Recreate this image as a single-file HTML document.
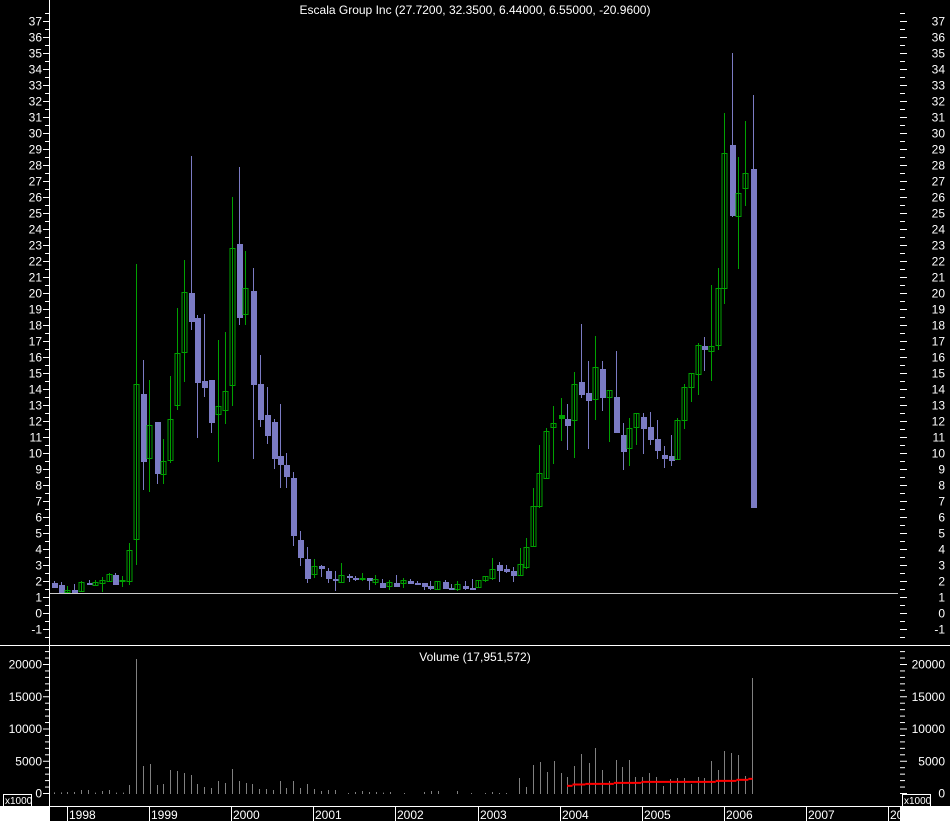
<!DOCTYPE html>
<html><head><meta charset="utf-8"><style>
html,body{margin:0;padding:0;background:#000;width:950px;height:821px;overflow:hidden}
svg{display:block}
text{font-family:"Liberation Sans",sans-serif;font-size:12px;fill:#fff}
</style></head><body>
<svg id="s" width="950" height="821" xmlns="http://www.w3.org/2000/svg"></svg>
<script>
var s=document.getElementById('s'),h='';
function L(x1,y1,x2,y2,c,w){h+='<line x1="'+x1+'" y1="'+y1+'" x2="'+x2+'" y2="'+y2+'" stroke="'+c+'" stroke-width="'+(w||1)+'"/>';}
function T(x,y,t,a){h+='<text x="'+x+'" y="'+y+'" text-anchor="'+(a||'start')+'">'+t+'</text>';}
h+='<rect width="950" height="821" fill="#000"/>';
for(var v=-2;v<=37.5;v+=0.5){var y=613-16*v+0.5;
 if(y<2||y>642)continue;
 var maj=(v%1===0);
 L(maj?43:45,y,50,y,'#fff');L(900,y,maj?907:905,y,'#fff');
 if(maj&&v>=-1){T(42,y+4,v,'end');T(945,y+4,v,'end');}}
L(49.5,0,49.5,806,'#fff');
L(50,593.5,898,593.5,'#ccc');
L(0,645.5,950,645.5,'#fff');
for(var k=0;k<=22;k++){var y=793.5-k*6.45;if(y<649)continue;var maj=(k%5===0);
 L(maj?43:45,y,50,y,'#fff');L(900,y,maj?907:905,y,'#fff');
 if(maj){T(42,y+4,k*1000,'end');T(945,y+4,k*1000,'end');}}
T(475,14,'Escala Group Inc (27.7200, 32.3500, 6.44000, 6.55000, -20.9600)','middle');
T(475,661,'Volume (17,951,572)','middle');
var C=[[54,581,588,583,587,'p'],[61,582,592,585,592,'p'],[67,586,592,590,592,'g'],[74,584,592,590,592,'p'],[81,581,592,582,591,'g'],[89,580,584,583,584,'p'],[95,580,586,582,585,'g'],[102,577,592,580,583,'g'],[109,573,582,574,581,'g'],[115,573,585,575,584,'p'],[122,576,587,580,581,'g'],[129,543,585,550,581,'g'],[136,264,565,384,539,'g'],[143,360,490,394,461,'p'],[149,380,492,425,458,'g'],[157,422,484,422,473,'p'],[163,439,484,461,474,'g'],[170,376,463,419,460,'g'],[177,308,410,353,405,'g'],[184,260,382,292,352,'g'],[191,156,330,293,321,'p'],[197,315,438,318,382,'p'],[204,314,397,381,387,'p'],[211,380,433,380,422,'p'],[218,340,462,406,414,'g'],[225,332,424,391,410,'g'],[232,197,406,248,385,'g'],[239,167,325,244,317,'p'],[245,251,325,288,314,'g'],[253,268,459,291,384,'p'],[260,355,427,384,419,'p'],[267,387,444,415,435,'p'],[274,419,469,422,458,'p'],[280,404,488,456,464,'p'],[286,453,488,465,476,'p'],[293,472,546,478,535,'p'],[300,531,566,540,557,'p'],[307,547,583,559,578,'p'],[314,559,578,566,574,'g'],
[321,565,577,566,568,'p'],[328,568,583,571,578,'p'],[335,571,591,579,580,'p'],[341,563,582,575,582,'g'],[349,574,582,576,577,'p'],[355,576,581,578,579,'p'],[362,573,581,578,579,'g'],[369,578,590,578,580,'p'],[375,575,585,579,582,'g'],[382,579,587,583,587,'p'],[389,580,590,582,586,'g'],[396,575,586,583,586,'p'],[403,578,588,580,583,'g'],[410,579,584,581,583,'p'],[417,581,585,583,584,'p'],[424,583,590,583,586,'p'],[430,581,590,586,588,'p'],[437,581,590,581,589,'g'],[445,580,588,582,588,'p'],[451,584,589,588,589,'p'],[457,581,591,584,589,'g'],[465,581,590,586,588,'p'],[472,579,589,588,589,'p'],[478,580,588,580,587,'g'],[485,576,582,576,580,'g'],[492,558,580,569,578,'g'],[499,562,582,565,570,'p'],[506,565,573,569,571,'p']];
var D=[[513,532,546,536,539,'p'],[520,514,539,529,539,'g'],[526,505,534,513,532,'g'],[533,458,513,475,512,'g'],[539,418,477,444,475,'g'],[546,402,449,405,449,'g'],[553,382,436,397,401,'g'],[561,374,414,390,393,'G'],[567,380,423,394,399,'p'],[574,350,430,361,395,'g'],[581,305,374,359,370,'p'],[588,340,422,369,376,'p'],[595,316,395,345,375,'g'],[602,340,386,347,373,'p'],[609,367,415,367,373,'g'],[616,330,407,373,406,'p'],[623,397,441,409,424,'p'],[629,393,438,402,421,'g'],[636,388,418,388,401,'g'],[643,388,426,392,402,'p'],[650,387,418,401,412,'p'],[657,395,431,412,423,'p'],[664,419,439,427,430,'p'],[671,409,438,428,432,'p'],[677,393,432,395,431,'g'],[684,361,403,364,395,'g'],[691,351,378,351,364,'g'],[698,323,371,325,352,'g'],[704,317,349,326,328,'p'],[711,269,358,326,330,'g'],[718,253,329,271,325,'g'],[724,108,286,145,271,'g'],[732,52,205,138,203,'p'],[738,149,254,183,204,'g'],[745,116,195,164,178,'g'],[753,91,477,160,476,'p']];
D.forEach(function(c){for(var j=1;j<5;j++)c[j]=Math.round(40+(c[j]-40)*3/2.8);C.push(c);});
var P='#7b7bc4',G='#00a000';
C.forEach(function(c){var col=c[5]=='p'?P:G;L(c[0]+.5,c[1],c[0]+.5,c[2],col);
 var hgt=Math.max(c[4]-c[3],1);
 if(c[5]=='g')h+='<rect x="'+(c[0]-2)+'" y="'+(c[3]+.5)+'" width="5" height="'+hgt+'" fill="none" stroke="'+G+'"/>';
 else h+='<rect x="'+(c[0]-2)+'" y="'+c[3]+'" width="6" height="'+(hgt+1)+'" fill="'+col+'"/>';});
var V=[8,157,23,157,38,156,53,156,68,150,83,150,98,158,113,153,128,150,143,158,158,158,173,135,202,78,217,72,232,135,247,132,262,90,277,93,292,99,307,105,321,132,336,141,351,144,366,123,381,129,397,87,411,123,426,129,441,132,456,147,471,147,486,150,500,123,515,144,530,123,545,144,560,132,575,147,590,153,605,150,620,150,650,159,665,156,680,153,695,156,710,156,725,158,740,156,770,159,815,156,830,153,845,153,887,153,918,159,948,159,963,156,978,159,993,159,1022,114,1037,141,1052,75,1067,66,1082,96,1097,63,1112,99,1127,111,1142,78,1157,42,1173,69,1188,24,1203,90,1218,123,1232,60,1246,81,1260,60,1275,111,1290,111,1305,99,1320,111,1335,138,1350,117,1366,114,1381,114,1396,132,1411,111,1425,114,1440,63,1455,90,1469,33,1484,39,1499,45,1514,108];
for(var i=0;i<V.length;i+=2){var x=Math.round(50+V[i]/2.178)+.5;L(x,740+V[i+1]/3,x,794,'#808080');}
L(136.5,659,136.5,794,'#808080');
L(752.5,678,752.5,794,'#808080');
var R=[[1126,1138,136],[1138,1166,132],[1166,1228,130],[1228,1288,127],[1288,1450,124],[1450,1495,121],[1495,1521,118],[1521,1530,115]];
R.forEach(function(r){L(50+r[0]/2.178,740+r[2]/3+.5,50+r[1]/2.178,740+r[2]/3+.5,'#f00',2);});
h+='<rect x="0" y="806" width="50" height="15" fill="#fff"/>';
L(50,806.5,900,806.5,'#fff');
var yrs=['1998','1999','2000','2001','2002','2003','2004','2005','2006','2007','20'];
for(var i=0;i<yrs.length;i++){var x=67+i*82.1;L(Math.round(x)+.5,806,Math.round(x)+.5,821,'#fff');T(Math.round(x)+2,819,yrs[i]);}
h+='<rect x="900" y="806" width="50" height="15" fill="#fff"/>';
h+='<rect x="3.5" y="794.5" width="28" height="12" fill="#000" stroke="#fff"/><text x="5" y="804" style="font-size:10px">x1000</text>';
h+='<rect x="902.5" y="794.5" width="28" height="12" fill="#000" stroke="#fff"/><text x="904" y="804" style="font-size:10px">x1000</text>';
s.innerHTML=h;
</script>
</body></html>
